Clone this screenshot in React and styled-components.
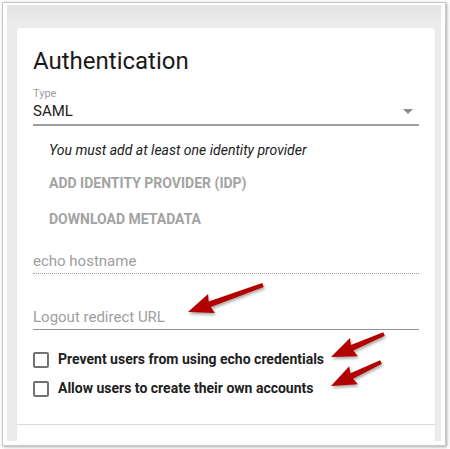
import React from 'react';
import styled, { createGlobalStyle } from 'styled-components';

const Global = createGlobalStyle`
  html, body {
    margin: 0;
    padding: 0;
    background: #ffffff;
  }
  * { box-sizing: border-box; }
`;

const Stage = styled.div`
  position: relative;
  width: 450px;
  height: 449px;
  padding: 2px;
  font-family: Roboto, "Liberation Sans", sans-serif;
`;

const Frame = styled.div`
  width: 444px;
  height: 444px;
  border: 1px solid #c9c9c9;
  box-shadow: 1px 1px 3px rgba(0, 0, 0, 0.35);
  padding: 2px 4px 4px 4px;
  background: #ffffff;
`;

const Backdrop = styled.div`
  height: 100%;
  background: linear-gradient(#e4e4e4, #ececec 20px);
  padding: 23px 6px 0 10px;
  overflow: hidden;
`;

const Card = styled.div`
  background: #ffffff;
  border-radius: 4px;
  box-shadow: 0 1px 2px rgba(0, 0, 0, 0.08);
  height: 440px;
  padding: 19px 0 0 0;
  display: flex;
  flex-direction: column;
`;

const Body = styled.div`
  padding: 0 16px;
  display: flex;
  flex-direction: column;
`;

const Title = styled.h1`
  margin: 0;
  font-size: 24px;
  line-height: 28px;
  font-weight: 400;
  color: #1a1a1a;
`;

const Label = styled.div`
  margin-top: 12px;
  font-size: 11px;
  line-height: 13px;
  color: #9e9e9e;
`;

const Select = styled.div`
  display: flex;
  align-items: center;
  justify-content: space-between;
  height: 26px;
  padding: 0 6px 2px 0;
  border-bottom: 2px solid #9e9e9e;
  font-size: 15px;
  color: #212121;
`;

const Caret = styled.span`
  width: 0;
  height: 0;
  border-left: 5px solid transparent;
  border-right: 5px solid transparent;
  border-top: 5px solid #8a8a8a;
`;

const Provider = styled.div`
  padding-left: 16px;
  margin-top: 14px;
  display: flex;
  flex-direction: column;
`;

const Notice = styled.div`
  font-size: 14px;
  line-height: 20px;
  font-style: italic;
  color: #212121;
`;

const TextButton = styled.div`
  font-size: 14px;
  line-height: 20px;
  font-weight: 700;
  text-transform: uppercase;
  color: #a3a3a3;
  margin-top: ${p => p.gap}px;
`;

const Field = styled.div`
  margin-top: ${p => p.gap}px;
  height: ${p => p.h}px;
  display: flex;
  align-items: flex-end;
  padding-bottom: 3px;
  font-size: 15px;
  line-height: 18px;
  color: #9e9e9e;
  border-bottom: 1px ${p => (p.dotted ? 'dotted' : 'solid')} ${p => (p.dotted ? '#a0a0a0' : '#949494')};
`;

const Checks = styled.div`
  margin-top: 21px;
  display: flex;
  flex-direction: column;
  gap: 12px;
`;

const CheckRow = styled.label`
  display: flex;
  align-items: center;
  gap: 9px;
  font-size: 14px;
  line-height: 17px;
  font-weight: 700;
  color: #212121;
`;

const Box = styled.span`
  width: 16px;
  height: 16px;
  border: 2px solid #737373;
  border-radius: 2px;
  flex: none;
`;

const Divider = styled.div`
  margin-top: 27px;
  border-top: 1px solid #dcdcdc;
`;

const Annotations = styled.svg`
  position: absolute;
  left: 0;
  top: 0;
  pointer-events: none;
`;

function arrowPoints(tx, ty, px, py) {
  const dx = px - tx;
  const dy = py - ty;
  const len = Math.hypot(dx, dy);
  const ux = dx / len;
  const uy = dy / len;
  const nx = -uy;
  const ny = ux;
  const head = 23;
  const halfHead = 10;
  const tail = 2;
  const neck = 3;
  const bx = px - ux * head;
  const by = py - uy * head;
  const pts = [
    [tx + nx * tail, ty + ny * tail],
    [bx + nx * neck, by + ny * neck],
    [bx + nx * halfHead - ux * 2, by + ny * halfHead - uy * 2],
    [px, py],
    [bx - nx * halfHead - ux * 2, by - ny * halfHead - uy * 2],
    [bx - nx * neck, by - ny * neck],
    [tx - nx * tail, ty - ny * tail],
  ];
  return pts.map(p => p[0].toFixed(1) + ',' + p[1].toFixed(1)).join(' ');
}

const arrows = [
  [263, 285, 188, 312],
  [384, 334, 331, 357],
  [381, 362, 331, 386],
];

export default function App() {
  return (
    <Stage>
      <Global />
      <Frame>
        <Backdrop>
          <Card>
            <Body>
              <Title>Authentication</Title>
              <Label>Type</Label>
              <Select>
                <span>SAML</span>
                <Caret />
              </Select>
              <Provider>
                <Notice>You must add at least one identity provider</Notice>
                <TextButton gap={13}>Add identity provider (IDP)</TextButton>
                <TextButton gap={16}>Download metadata</TextButton>
              </Provider>
              <Field dotted gap={12} h={33}>echo hostname</Field>
              <Field gap={23} h={33}>Logout redirect URL</Field>
              <Checks>
                <CheckRow><Box />Prevent users from using echo credentials</CheckRow>
                <CheckRow><Box />Allow users to create their own accounts</CheckRow>
              </Checks>
            </Body>
            <Divider />
          </Card>
        </Backdrop>
      </Frame>
      <Annotations width="450" height="449" viewBox="0 0 450 449">
        <defs>
          <filter id="shade" x="-20%" y="-20%" width="140%" height="160%">
            <feDropShadow dx="1" dy="2" stdDeviation="1.5" floodColor="#000" floodOpacity="0.35" />
          </filter>
        </defs>
        {arrows.map((a, i) => (
          <polygon key={i} points={arrowPoints(...a)} fill="#b20000" filter="url(#shade)" />
        ))}
      </Annotations>
    </Stage>
  );
}
